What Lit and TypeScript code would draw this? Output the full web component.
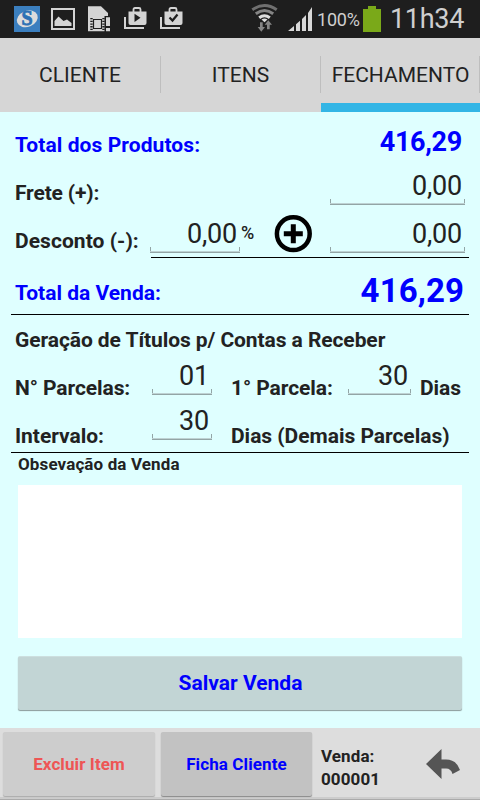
import { LitElement, html, css, svg } from "lit";
import { customElement, property } from "lit/decorators.js";

@customElement("value-field")
class ValueField extends LitElement {
  @property() value = "";

  static styles = css`
    :host {
      display: block;
      box-sizing: border-box;
      height: 35px;
      flex: none;
      font-size: 27px;
      line-height: 32px;
      letter-spacing: -0.2px;
      text-align: right;
      padding-right: 3px;
      color: #222;
      background:
        linear-gradient(#93a5a6, #93a5a6) left bottom / 100% 1px no-repeat,
        linear-gradient(#bed2d3, #bed2d3) left 0 bottom 1px / 100% 1px no-repeat,
        linear-gradient(#93a5a6, #93a5a6) left bottom / 1px 6px no-repeat,
        linear-gradient(#93a5a6, #93a5a6) right bottom / 1px 6px no-repeat;
    }
  `;

  render() {
    return html`${this.value}`;
  }
}

@customElement("status-bar")
class StatusBar extends LitElement {
  static styles = css`
    :host {
      display: flex;
      height: 38px;
      flex: none;
      background: #1e1e1e;
      color: #cfcfcf;
    }
    .left { width: 250px; height: 38px; flex: none; }
    .signal { width: 66px; height: 38px; flex: none; }
    .percent { width: 47px; font-size: 18px; line-height: 39px; letter-spacing: -0.2px; padding-left: 1px; box-sizing: border-box; }
    .battery { width: 18px; height: 38px; flex: none; }
    .clock { font-size: 27px; line-height: 38px; letter-spacing: -0.3px; margin-left: 9px; white-space: nowrap; }
    .logo { font: bold 20px "Liberation Serif", serif; }
  `;

  bag(x: number, mark: unknown) {
    return svg`<g transform="translate(${x} 0)">
      <path d="M1 17V28H20" fill="none" stroke="#d4d4d4" stroke-width="2"/>
      <path d="M9.500 12V9.500Q9.500 8 11 8H15Q16.500 8 16.500 9.500V12" fill="none" stroke="#d4d4d4" stroke-width="1.800"/>
      <path d="M4.500 11.500H22.500V23Q22.500 25 20.500 25H6.500Q4.500 25 4.500 23Z" fill="#d4d4d4"/>
      ${mark}
    </g>`;
  }

  render() {
    return html`
      <svg class="left" viewBox="0 0 250 38">
        <rect x="14" y="6" width="26" height="26" fill="#3b7fbf"/>
        <ellipse cx="27.300" cy="18.800" rx="10.800" ry="8" fill="#dcdcdc" transform="rotate(-22 27.300 18.800)"/>
        <text class="logo" x="27" y="25" text-anchor="middle" fill="#2d70b4" stroke="#2d70b4" stroke-width=".8">S</text>
        <rect x="52" y="9" width="22" height="20" fill="none" stroke="#d4d4d4" stroke-width="2"/>
        <path d="M54.500 26V21L58.500 16.500L63.500 21L67 19.500L71.500 23V26Z" fill="#d4d4d4"/>
        <path d="M88 6.300H101L108 13V31.300H88Z" fill="#d4d4d4"/>
        <path d="M93.500 19.500H101.500V28.500H93.500Z" fill="none" stroke="#1e1e1e" stroke-width="1.200"/>
        <path d="M91.500 18V30M103.500 18V30" stroke="#1e1e1e" stroke-width="2.400" stroke-dasharray="1.300 1.400"/>
        <path d="M104.500 16H111.500V32H104.500Z" fill="#1e1e1e"/>
        <path d="M106 17.300H110V26H106ZM106 28H110V31.300H106Z" fill="#d4d4d4"/>
        ${this.bag(124, svg`<path d="M10.500 13.700V22L16.500 17.800Z" fill="#1e1e1e"/>`)}
        ${this.bag(160, svg`<path d="M9.500 17.500L12.500 20.500L17.500 14.500" fill="none" stroke="#1e1e1e" stroke-width="2.200"/>`)}
      </svg>
      <svg class="signal" viewBox="250 0 66 38">
        <path d="M252.300 9.700Q264.500 1.300 276.700 9.700" fill="none" stroke="#707070" stroke-width="3"/>
        <path d="M255.800 13.700Q264.500 7.300 273.200 13.700" fill="none" stroke="#858585" stroke-width="3"/>
        <path d="M259.200 17.700Q264.500 13.700 269.800 17.700" fill="none" stroke="#dedede" stroke-width="3"/>
        <path d="M264.500 22.300L261.500 19.600Q264.500 17.400 267.500 19.600Z" fill="#dedede"/>
        <path d="M260 22.300H262.700V27H265L261.300 31.700L257.700 27H260Z" fill="#858585"/>
        <path d="M267 29.300H269.700V24.700H272L268.300 20.300L264.700 24.700H267Z" fill="#858585"/>
        <path d="M288 31L294 26V31ZM296 24.300L300 20.700V31H296ZM302 19L306 15V31H302ZM308 13L312 7V31H308Z" fill="#d8d8d8"/>
      </svg>
      <span class="percent">100%</span>
      <svg class="battery" viewBox="0 0 18 38">
        <path d="M0 9H5V6H13V9H18V32H0Z" fill="#7aa919"/>
      </svg>
      <span class="clock">11h34</span>
    `;
  }
}

@customElement("app-root")
class AppRoot extends LitElement {
  static styles = css`
    :host {
      display: flex;
      flex-direction: column;
      width: 480px;
      height: 800px;
      overflow: hidden;
      background: #dfffff;
      color: #222;
      font-family: Roboto, "Liberation Sans", sans-serif;
      font-size: 21px;
      line-height: 24px;
      white-space: nowrap;
    }
    .tabs {
      display: grid;
      grid-template-columns: 161px 160px 159px;
      height: 74px;
      flex: none;
      background: #d6d6d6;
    }
    .tab {
      box-sizing: border-box;
      text-align: center;
      padding: 25px 1px 0 0;
      background: linear-gradient(#bebebe, #bebebe) right 0 top 18px / 1px 37px no-repeat;
    }
    .tab.active { padding-right: 0; border-bottom: 9px solid #33b5e5; }
    .row {
      display: flex;
      align-items: flex-start;
      box-sizing: border-box;
      flex: none;
      padding-left: 15px;
    }
    .label { font-weight: 700; box-sizing: border-box; flex: none; letter-spacing: -0.08px; }
    .blue { color: #0000fe; }
    .products { height: 58px; }
    .products .label { padding-top: 21px; width: 315px; letter-spacing: 0.08px; }
    .sum { font-weight: 700; font-size: 27px; line-height: 32px; letter-spacing: -0.3px; width: 132px; text-align: right; margin-top: 14px; }
    .freight { height: 48px; }
    .freight .label { padding-top: 11px; width: 315px; letter-spacing: -0.15px; }
    .w-amount { width: 135px; }
    .discount { height: 39px; }
    .discount .label { padding-top: 11px; width: 135px; letter-spacing: 0.05px; }
    .discount .w-rate { width: 90px; }
    .unit { font-weight: 500; font-size: 18px; width: 33px; padding: 3px 0 0 1px; flex: none; }
    .plus { width: 38px; height: 38px; margin: -3px 18px 0 0; flex: none; }
    .rule { height: 1px; background: #000; flex: none; margin: 0 11px; }
    .rule.short { margin-left: 151px; }
    .total { height: 56px; }
    .total .label { padding-top: 23px; width: 315px; letter-spacing: 0; }
    .total .sum { font-size: 33px; line-height: 38px; letter-spacing: 0.1px; width: 134px; }
    .heading { height: 45px; padding-top: 13px; }
    .plan { height: 45px; }
    .plan .label { padding-top: 16px; }
    .plan .first { width: 137px; }
    .plan .w-parts { width: 60px; }
    .plan .second { margin-left: 19px; width: 117px; }
    .plan .w-days { width: 63px; }
    .plan .third { margin-left: 9px; }
    .plan.gap { height: 47px; }
    .plan.gap .label { padding-top: 19px; letter-spacing: -0.03px; }
    .notes-title { font-size: 17px; line-height: 20px; letter-spacing: 0.12px; padding: 1px 0 0 18px; height: 32px; }
    .notes { height: 153px; margin: 0 18px; background: #fff; flex: none; }
    .button {
      box-sizing: border-box;
      text-align: center;
      font-weight: 700;
      border-radius: 2px;
      flex: none;
    }
    .save {
      height: 54px;
      margin: 18px 18px 18px;
      padding: 14px 0 0 1px;
      background: #c2d5d5;
      border-top: 1px solid #cddfdf;
      box-shadow: 0 1px 1px #8b9b9b;
    }
    .footer {
      display: flex;
      height: 72px;
      flex: none;
      box-sizing: border-box;
      padding: 4px 0 0 3px;
      background: linear-gradient(#aaa, #aaa) left bottom / 100% 1px no-repeat, linear-gradient(#ccc, #ccc) left 0 bottom 1px / 100% 2px no-repeat, #ddd;
      font-size: 17px;
      letter-spacing: 0.1px;
      font-weight: 700;
    }
    .footer .button { height: 64px; padding-top: 20px; width: 152px; background: #cdcdcd; box-shadow: 0 1px 1px #aaa; }
    .footer .button.remove { color: #ee5555; margin-right: 6px; }
    .footer .button.record { width: 151px; background: #c2c2c2; box-shadow: 0 1px 1px #888; }
    .sale { width: 105px; margin-left: 9px; padding-top: 13px; line-height: 23px; }
    .back { width: 36px; height: 36px; margin-top: 14px; }
  `;

  render() {
    return html`
      <status-bar></status-bar>
      <div class="tabs">
        <div class="tab">CLIENTE</div>
        <div class="tab">ITENS</div>
        <div class="tab active">FECHAMENTO</div>
      </div>
      <div class="row products">
        <span class="label blue">Total dos Produtos:</span>
        <span class="sum blue">416,29</span>
      </div>
      <div class="row freight">
        <span class="label">Frete (+):</span>
        <value-field class="w-amount" value="0,00"></value-field>
      </div>
      <div class="row discount">
        <span class="label">Desconto (-):</span>
        <value-field class="w-rate" value="0,00"></value-field>
        <span class="unit">%</span>
        <svg class="plus" viewBox="0 0 38 38">
          <circle cx="19.300" cy="18.700" r="16.400" fill="none" stroke="#000" stroke-width="4.500"/>
          <path d="M19.300 9.200V28.200M9.800 18.700H28.800" stroke="#000" stroke-width="5"/>
        </svg>
        <value-field class="w-amount" value="0,00"></value-field>
      </div>
      <div class="rule short"></div>
      <div class="row total">
        <span class="label blue">Total da Venda:</span>
        <span class="sum blue">416,29</span>
      </div>
      <div class="rule"></div>
      <div class="row heading"><span class="label">Geração de Títulos p/ Contas a Receber</span></div>
      <div class="row plan">
        <span class="label first">N° Parcelas:</span>
        <value-field class="w-parts" value="01"></value-field>
        <span class="label second">1° Parcela:</span>
        <value-field class="w-days" value="30"></value-field>
        <span class="label third">Dias</span>
      </div>
      <div class="row plan gap">
        <span class="label first">Intervalo:</span>
        <value-field class="w-parts" value="30"></value-field>
        <span class="label second">Dias (Demais Parcelas)</span>
      </div>
      <div class="rule"></div>
      <div class="row label notes-title">Obsevação da Venda</div>
      <div class="notes"></div>
      <div class="button save blue">Salvar Venda</div>
      <div class="footer">
        <div class="button remove">Excluir Item</div>
        <div class="button record blue">Ficha Cliente</div>
        <div class="sale">Venda:<br>000001</div>
        <svg class="back" viewBox="0 0 36 36">
          <path d="M0 18L15.500 3V13.500H20Q30.500 13.500 34 24L26.500 28Q25 22.500 20 22.500H15.500V33Z" fill="#555"/>
        </svg>
      </div>
    `;
  }
}
